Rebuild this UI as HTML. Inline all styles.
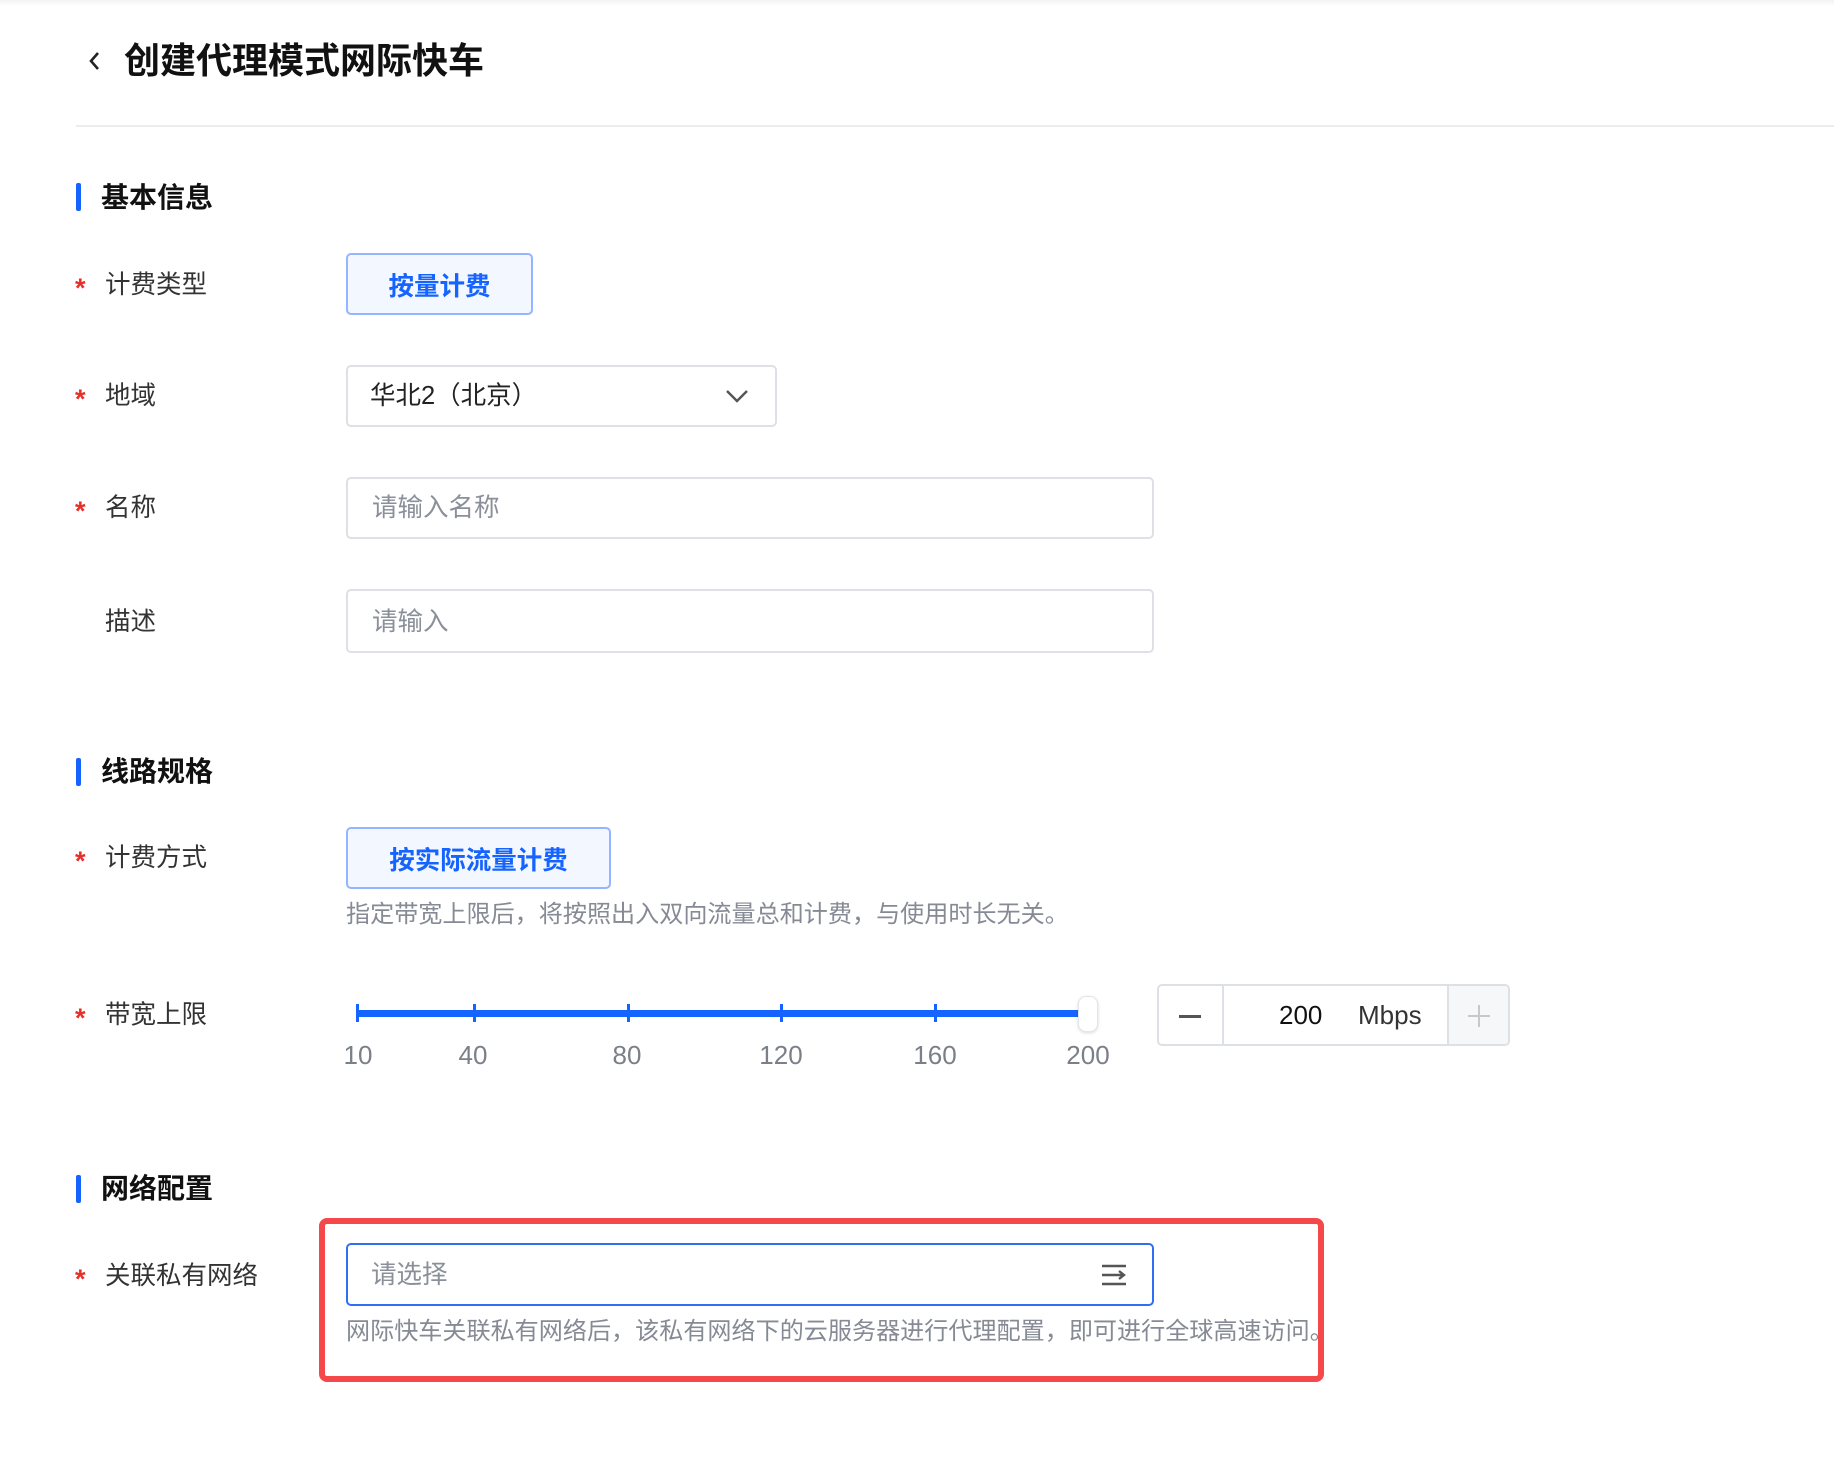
<!DOCTYPE html>
<html><head><meta charset="utf-8"><style>
*{margin:0;padding:0;box-sizing:border-box}
body{width:1834px;height:1470px;background:#fff;position:relative;overflow:hidden;font-family:"Liberation Sans","Noto Sans CJK SC",sans-serif;color:#1d2129}
.a{position:absolute;white-space:nowrap}
.lbl{position:absolute;left:105px;font-size:25.5px;color:#333;line-height:30px}
.star{position:absolute;left:75px;font-size:27px;color:#e5302a;line-height:30px;font-weight:bold}
.sec{position:absolute;left:101px;font-size:28px;font-weight:bold;color:#111;line-height:34px}
.bar{position:absolute;left:76px;width:5px;height:28px;background:#1664ff;border-radius:2px}
.box{position:absolute;border:2px solid #dde0e5;border-radius:5px;background:#fff}
.btn{position:absolute;border:2px solid #94b5ff;border-radius:5px;background:#f3f7ff;color:#1664ff;font-size:25.5px;font-weight:bold;display:flex;align-items:center;justify-content:center}
.ph{position:absolute;font-size:25.5px;color:#8a8f99;line-height:30px}
.hint{position:absolute;left:346px;font-size:24.1px;color:#858a94;line-height:28px}
.tick{position:absolute;top:1004px;width:3px;height:18px;background:#1664ff}
.num{position:absolute;top:1040px;font-size:26px;color:#7a7f88;line-height:30px;transform:translateX(-50%)}
</style></head><body>
<div class="a" style="left:0;top:0;width:1834px;height:6px;background:linear-gradient(#f2f3f5,#fff)"></div>
<svg class="a" style="left:87px;top:50px" width="16" height="22" viewBox="0 0 16 22"><path d="M11 3 L4 11 L11 19" fill="none" stroke="#222" stroke-width="2.6"/></svg>
<div class="a" style="left:124px;top:40px;font-size:36px;font-weight:bold;color:#111;line-height:42px">创建代理模式网际快车</div>
<div class="a" style="left:76px;top:125px;width:1758px;height:2px;background:#eaecef"></div>

<div class="bar" style="top:183px"></div><div class="sec" style="top:181px">基本信息</div>
<div class="star" style="top:273px">*</div><div class="lbl" style="top:270px">计费类型</div>
<div class="btn" style="left:346px;top:253px;width:187px;height:62px">按量计费</div>

<div class="star" style="top:384px">*</div><div class="lbl" style="top:381px">地域</div>
<div class="box" style="left:346px;top:365px;width:431px;height:62px"></div>
<div class="a" style="left:370px;top:381px;font-size:25.5px;color:#222;line-height:30px">华北2（北京）</div>
<svg class="a" style="left:725px;top:388px" width="24" height="16" viewBox="0 0 24 16"><path d="M2 3 L12 13 L22 3" fill="none" stroke="#555" stroke-width="2.4"/></svg>

<div class="star" style="top:496px">*</div><div class="lbl" style="top:493px">名称</div>
<div class="box" style="left:346px;top:477px;width:808px;height:62px"></div>
<div class="ph" style="left:372px;top:493px">请输入名称</div>

<div class="lbl" style="top:607px">描述</div>
<div class="box" style="left:346px;top:589px;width:808px;height:64px"></div>
<div class="ph" style="left:372px;top:607px">请输入</div>

<div class="bar" style="top:758px"></div><div class="sec" style="top:755px">线路规格</div>
<div class="star" style="top:846px">*</div><div class="lbl" style="top:843px">计费方式</div>
<div class="btn" style="left:346px;top:827px;width:265px;height:62px">按实际流量计费</div>
<div class="hint" style="top:901px">指定带宽上限后，将按照出入双向流量总和计费，与使用时长无关。</div>

<div class="star" style="top:1003px">*</div><div class="lbl" style="top:1000px">带宽上限</div>
<div class="a" style="left:357px;top:1010px;width:731px;height:7px;background:#1664ff"></div>
<div class="tick" style="left:356px"></div><div class="tick" style="left:473px"></div><div class="tick" style="left:627px"></div><div class="tick" style="left:780px"></div><div class="tick" style="left:934px"></div>
<div class="a" style="left:1078px;top:996px;width:20px;height:36px;background:#fff;border:1px solid #e3e5e8;border-radius:8px;box-shadow:0 1px 3px rgba(0,0,0,.15)"></div>
<div class="num" style="left:358px">10</div><div class="num" style="left:473px">40</div><div class="num" style="left:627px">80</div><div class="num" style="left:781px">120</div><div class="num" style="left:935px">160</div><div class="num" style="left:1088px">200</div>
<div class="box" style="left:1157px;top:984px;width:353px;height:62px;overflow:hidden">
 <div class="a" style="left:63px;top:0;width:2px;height:60px;background:#dde0e5"></div>
 <div class="a" style="left:288px;top:0;width:63px;height:60px;background:#f6f7f9;border-left:2px solid #dde0e5"></div>
 <div class="a" style="left:20px;top:29px;width:22px;height:3px;background:#555"></div>
 <div class="a" style="left:309px;top:29px;width:22px;height:2px;background:#c5c8cd"></div>
 <div class="a" style="left:319px;top:19px;width:2px;height:22px;background:#c5c8cd"></div>
 <div class="a" style="left:120px;top:14px;font-size:26px;color:#111;line-height:30px">200</div>
 <div class="a" style="left:199px;top:14px;font-size:26px;color:#333;line-height:30px">Mbps</div>
</div>

<div class="bar" style="top:1175px"></div><div class="sec" style="top:1172px">网络配置</div>
<div class="star" style="top:1264px">*</div><div class="lbl" style="top:1261px">关联私有网络</div>
<div class="a" style="left:319px;top:1218px;width:1005px;height:164px;border:6px solid #f5484a;border-radius:8px"></div>
<div class="box" style="left:346px;top:1243px;width:808px;height:63px;border-color:#2f6ff7"></div>
<div class="ph" style="left:371px;top:1260px">请选择</div>
<svg class="a" style="left:1101px;top:1263px" width="26" height="24" viewBox="0 0 26 24"><path d="M1 3H25M1 12H21M1 21H25M18 8L23 12L18 16" fill="none" stroke="#555" stroke-width="2.4"/></svg>
<div class="hint" style="top:1318px">网际快车关联私有网络后，该私有网络下的云服务器进行代理配置，即可进行全球高速访问。</div>
</body></html>
